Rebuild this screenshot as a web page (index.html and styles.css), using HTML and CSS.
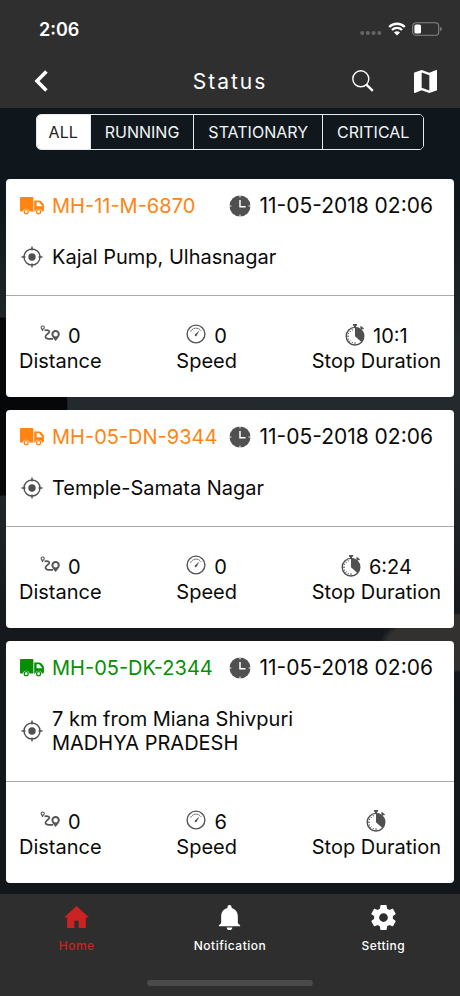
FILE: index.html
```html
<!DOCTYPE html>
<html lang="en">
<head>
    <meta charset="UTF-8">
    <meta name="viewport" content="width=device-width, initial-scale=1.0">
    <title>Status</title>
    <link rel="stylesheet" href="styles.css">
</head>
<body>

    <!-- shared icons -->
    <svg class="sprite" aria-hidden="true">
        <symbol id="truck" viewBox="0 0 24 18">
            <path fill-rule="evenodd" d="M1 0H12.4Q13.4 0 13.4 1V14.4H9.4A3.3 3.3 0 0 0 2.9 14.4H1Q0 14.4 0 13.4V1Q0 0 1 0ZM14.2 3.4H19.2Q20.2 3.4 20.9 4.1L23.2 6.6Q23.9 7.4 23.9 8.4V13.3Q23.9 14.4 22.6 14.4H21.9A3.3 3.3 0 0 0 15.4 14.4H14.2ZM16.6 5.2V9.2H21.9V8.4L19.2 5.2Z"/>
            <path fill-rule="evenodd" d="M6.2 12.1A2.6 2.6 0 1 1 6.2 17.3A2.6 2.6 0 1 1 6.2 12.1ZM6.2 13.3A1.4 1.4 0 1 0 6.2 16.1A1.4 1.4 0 1 0 6.2 13.3ZM18.6 12.1A2.6 2.6 0 1 1 18.6 17.3A2.6 2.6 0 1 1 18.6 12.1ZM18.6 13.3A1.4 1.4 0 1 0 18.6 16.1A1.4 1.4 0 1 0 18.6 13.3Z"/>
        </symbol>
        <symbol id="clock" viewBox="0 0 22 22">
            <circle cx="11" cy="11" r="10.5"/>
            <path d="M11 5V11.7H16.6" fill="none" stroke="#fff" stroke-width="1.5"/>
            <path d="M11 0V2.4M11 19.6V22M0 11H2.4M19.6 11H22" stroke="#fff" stroke-width="1"/>
        </symbol>
        <symbol id="target" viewBox="0 0 22 22">
            <circle cx="11" cy="11" r="8" fill="none" stroke="currentColor" stroke-width="1.4"/>
            <circle cx="11" cy="11" r="3.7"/>
            <path d="M11 .5V4.5M11 17.5V21.5M.5 11H4.5M17.5 11H21.5" stroke="currentColor" stroke-width="1.4"/>
        </symbol>
        <symbol id="route" viewBox="0 0 20 20">
            <circle cx="2.7" cy="3.6" r="1.6" fill="none" stroke="currentColor" stroke-width="1.1"/>
            <path d="M1.3 4.8L2.2 7.4L3.9 5.4Z"/>
            <path d="M4.6 6.4C7 5.8 9.6 6.4 9.4 7.9C9.2 9.4 5.4 10.4 5.4 12.8C5.4 15.1 9 14.8 13 14.8" fill="none" stroke="currentColor" stroke-width="1.7"/>
            <path fill-rule="evenodd" d="M15.6 6A4.2 4.2 0 0 1 19.8 10.2C19.8 12.7 17 15 15.6 17C14.2 15 11.4 12.7 11.4 10.2A4.2 4.2 0 0 1 15.6 6ZM15.6 8A2.2 2.2 0 1 0 15.6 12.4A2.2 2.2 0 1 0 15.6 8Z"/>
        </symbol>
        <symbol id="gauge" viewBox="0 0 20 20">
            <circle cx="10" cy="10" r="8.9" fill="none" stroke="currentColor" stroke-width="1.4"/>
            <path d="M4.6 7.6A6 6 0 0 1 15 6.8" fill="none" stroke="currentColor" stroke-width="1" stroke-dasharray="1.8 .5"/>
            <path d="M13.4 6.4L10.9 11.2A1.1 1.1 0 1 1 9.4 10Z"/>
        </symbol>
        <symbol id="stopwatch" viewBox="0 0 20 22">
            <circle cx="10" cy="12.2" r="8.8" fill="none" stroke="currentColor" stroke-width="1.4"/>
            <path d="M10 12.2V3.6A8.6 8.6 0 0 1 16.4 18Z"/>
            <path d="M7.9 0H12.1V1.7H11V3.4H9V1.7H7.9ZM14.9 3.1L16 1.9L19 4.4L18 5.6L17.2 5L16.5 5.8L15.3 4.8L15.8 4Z"/>
            <path d="M2 12.2H4M10 20V18.2M4.3 6.6L5.6 7.9M4.3 17.8L5.6 16.5M2.8 9L4 9.6M2.8 15.4L4 14.8M7 19.2L7.5 18M7 5.2L7.5 6.4" stroke="currentColor" stroke-width="1"/>
        </symbol>
    </svg>

    <header class="header">
        <div class="status-bar">
            <span class="time">2:06</span>
            <div class="signals">
                <svg class="dots" viewBox="0 0 22 6"><circle cx="2.2" cy="3" r="2"/><circle cx="7.9" cy="3" r="2"/><circle cx="13.6" cy="3" r="2"/><circle cx="19.3" cy="3" r="2"/></svg>
                <svg class="wifi" viewBox="0 0 18 14">
                    <path d="M1.2 5A11 11 0 0 1 16.8 5M4 8A7 7 0 0 1 14 8" fill="none" stroke="#fff" stroke-width="2.3"/>
                    <path d="M9 13.6L6 10.5A4.2 4.2 0 0 1 12 10.5Z" fill="#fff"/>
                </svg>
                <svg class="battery" viewBox="0 0 30 14">
                    <rect x=".7" y=".7" width="26" height="12.6" rx="3.4" fill="none" stroke="#858585" stroke-width="1.1"/>
                    <rect x="2.4" y="2.4" width="6.6" height="9.2" rx="1.6" fill="#fff"/>
                    <path d="M28.2 4.8Q29.8 5.6 29.8 7T28.2 9.2Z" fill="#858585"/>
                </svg>
            </div>
        </div>
        <div class="nav">
            <button type="button" class="icon-button" aria-label="Back">
                <svg class="back" viewBox="0 0 14 22"><path d="M12.4 1.6L3 11L12.4 20.4" fill="none" stroke="#fff" stroke-width="3.6"/></svg>
            </button>
            <h1>Status</h1>
            <div class="nav-actions">
                <button type="button" class="icon-button" aria-label="Search">
                    <svg class="search" viewBox="0 0 22 22"><circle cx="8.8" cy="8.8" r="8" fill="none" stroke="#fff" stroke-width="1.4"/><path d="M14.4 14.6L20.8 20.8" stroke="#fff" stroke-width="2.4"/></svg>
                </button>
                <button type="button" class="icon-button" aria-label="Map">
                    <svg class="map" viewBox="3 3 18 18"><path fill="#fff" d="M20.5 3l-.16.03L15 5.1 9 3 3.36 4.9c-.21.07-.36.25-.36.48V20.5c0 .28.22.5.5.5l.16-.03L9 18.9l6 2.1 5.64-1.9c.21-.07.36-.25.36-.48V3.5c0-.28-.22-.5-.5-.5zM15 19l-6-2.11V5l6 2.11V19z"/></svg>
                </button>
            </div>
        </div>
    </header>

    <main class="content">
        <div class="filters">
            <button type="button" class="filter active">ALL</button>
            <button type="button" class="filter">RUNNING</button>
            <button type="button" class="filter">STATIONARY</button>
            <button type="button" class="filter">CRITICAL</button>
        </div>

        <article class="card">
            <div class="card-info">
                <div class="card-head">
                    <h2 class="vehicle idle"><svg class="truck"><use href="#truck"/></svg>MH-11-M-6870</h2>
                    <div class="date"><svg class="round"><use href="#clock"/></svg>11-05-2018 02:06</div>
                </div>
                <div class="place"><svg class="round"><use href="#target"/></svg><p>Kajal Pump, Ulhasnagar</p></div>
            </div>
            <div class="stats">
                <div class="stat"><div class="value"><svg class="small"><use href="#route"/></svg>0</div>Distance</div>
                <div class="stat"><div class="value"><svg class="small"><use href="#gauge"/></svg>0</div>Speed</div>
                <div class="stat"><div class="value"><svg class="watch"><use href="#stopwatch"/></svg>10:1</div>Stop Duration</div>
            </div>
        </article>

        <article class="card">
            <div class="card-info">
                <div class="card-head">
                    <h2 class="vehicle idle"><svg class="truck"><use href="#truck"/></svg>MH-05-DN-9344</h2>
                    <div class="date"><svg class="round"><use href="#clock"/></svg>11-05-2018 02:06</div>
                </div>
                <div class="place"><svg class="round"><use href="#target"/></svg><p>Temple-Samata Nagar</p></div>
            </div>
            <div class="stats">
                <div class="stat"><div class="value"><svg class="small"><use href="#route"/></svg>0</div>Distance</div>
                <div class="stat"><div class="value"><svg class="small"><use href="#gauge"/></svg>0</div>Speed</div>
                <div class="stat"><div class="value"><svg class="watch"><use href="#stopwatch"/></svg>6:24</div>Stop Duration</div>
            </div>
        </article>

        <article class="card">
            <div class="card-info">
                <div class="card-head">
                    <h2 class="vehicle moving"><svg class="truck"><use href="#truck"/></svg>MH-05-DK-2344</h2>
                    <div class="date"><svg class="round"><use href="#clock"/></svg>11-05-2018 02:06</div>
                </div>
                <div class="place"><svg class="round"><use href="#target"/></svg><p>7 km from Miana Shivpuri<br>MADHYA PRADESH</p></div>
            </div>
            <div class="stats">
                <div class="stat"><div class="value"><svg class="small"><use href="#route"/></svg>0</div>Distance</div>
                <div class="stat"><div class="value"><svg class="small"><use href="#gauge"/></svg>6</div>Speed</div>
                <div class="stat"><div class="value"><svg class="watch"><use href="#stopwatch"/></svg></div>Stop Duration</div>
            </div>
        </article>
    </main>

    <footer class="footer">
        <nav class="tabs">
            <a href="#home" class="tab active">
                <svg viewBox="0 0 24 24"><path d="M12 1L24 12H21V22H14V15H10V22H3V12H0Z"/></svg>
                Home
            </a>
            <a href="#notification" class="tab">
                <svg viewBox="0 0 24 24"><path d="M12 24a2.7 2.7 0 0 0 2.7-2.5H9.3A2.7 2.7 0 0 0 12 24zM20 17.5V11c0-4-2.2-7.2-6-8.2V2a2 2 0 0 0-4 0v.8C6.2 3.8 4 7 4 11v6.5L1.8 19.5V20.5H22.2V19.5z"/></svg>
                Notification
            </a>
            <a href="#setting" class="tab">
                <svg viewBox="2 2 20 20"><path d="M12 15.5A3.5 3.5 0 0 1 8.5 12 3.5 3.5 0 0 1 12 8.5a3.5 3.5 0 0 1 3.5 3.5 3.5 3.5 0 0 1-3.5 3.5m7.43-2.53c.04-.32.07-.64.07-.97s-.03-.66-.07-1l2.11-1.63c.19-.15.24-.42.12-.64l-2-3.46c-.12-.22-.39-.31-.61-.22l-2.49 1c-.52-.39-1.06-.73-1.69-.98l-.37-2.65A.506.506 0 0 0 14 2h-4c-.25 0-.46.18-.5.42l-.37 2.65c-.63.25-1.17.59-1.69.98l-2.49-1c-.22-.09-.49 0-.61.22l-2 3.46c-.13.22-.07.49.12.64L4.57 11c-.04.34-.07.67-.07 1s.03.65.07.97l-2.11 1.66c-.19.15-.25.42-.12.64l2 3.46c.12.22.39.3.61.22l2.49-1.01c.52.4 1.06.74 1.69.99l.37 2.65c.04.24.25.42.5.42h4c.25 0 .46-.18.5-.42l.37-2.65c.63-.26 1.17-.59 1.69-.99l2.49 1.01c.22.08.49 0 .61-.22l2-3.46c.12-.22.07-.49-.12-.64z"/></svg>
                Setting
            </a>
        </nav>
        <div class="home-bar"></div>
    </footer>

</body>
</html>
```
FILE: styles.css
```css
* { box-sizing: border-box; }
body { margin: 0; min-height: 100vh; display: flex; flex-direction: column; font-family: Inter, "Liberation Sans", sans-serif; font-size: 20px; line-height: 25px; color: #0a0a0a; background-color: #11181d; }
h1, h2, p { margin: 0; font-weight: 400; }
button { font-family: inherit; cursor: pointer; }
svg { display: block; flex: none; }
.sprite { display: none; }

.header { height: 108px; background-color: #2f2f2f; color: white; }
.status-bar { display: flex; justify-content: space-between; align-items: center; height: 56px; padding: 2px 18px 0 39px; }
.time { font-size: 18px; font-weight: 600; }
.signals { display: flex; align-items: center; gap: 6px; }
.dots { width: 22px; height: 6px; margin-top: 8px; fill: #666; }
.wifi { width: 18px; height: 14px; }
.battery { width: 30px; height: 14px; }
.nav { display: grid; grid-template-columns: 1fr auto 1fr; align-items: center; height: 50px; padding: 0 23px; }
h1 { font-size: 21px; letter-spacing: 2px; }
.icon-button { padding: 0; border: none; background: none; }
.nav-actions { display: flex; justify-content: flex-end; align-items: center; gap: 40px; }
.back { width: 14px; height: 22px; margin-left: 11px; }
.search { width: 22px; height: 22px; }
.map { width: 23px; height: 23px; }

/* dark backdrop that shows between the cards */
.content {
    flex: 1; display: flex; flex-direction: column; gap: 13px; padding: 6px 6px 11px;
    background:
        radial-gradient(ellipse 68px 90px at 0 38%, #060708 98%, transparent),
        radial-gradient(ellipse 80px 30px at 100% 68%, #33312f 90%, transparent),
        linear-gradient(#10171c, #10171c 12%, #232a2d 30%, #23292c 45%, #15191d 65%, #11171b);
}
.filters { display: flex; align-self: center; height: 36px; margin-bottom: 16px; border: 1px solid #e4eaf0; border-radius: 5px; overflow: hidden; }
.filter { padding: 0 14px; border: none; border-left: 1px solid #e4eaf0; background: #11181d; color: #f2f5f7; font-size: 16px; }
.filter:first-child { padding: 0 12px; border-left: none; }
.filter.active { background: white; color: #222; }

.card { background: white; border-radius: 4px; }
.card-info { padding: 15px 21px 26px 14px; border-bottom: 1px solid #aaa; }
.card-head { display: flex; justify-content: space-between; line-height: 24px; white-space: nowrap; }
.vehicle, .date, .place { display: flex; align-items: center; }
.vehicle { gap: 8px; font-size: 20px; }
.idle { color: #ff8412; }
.moving { color: #058f05; }
.truck { width: 24px; height: 18px; fill: currentColor; }
.date { gap: 8px; font-size: 21px; }
.round { width: 22px; height: 22px; color: #505050; fill: currentColor; }
.place { gap: 9px; margin-top: 27px; padding-left: 1px; line-height: 24px; }
.stats { display: flex; justify-content: space-between; padding: 28px 13px 23px; text-align: center; }
.value { display: flex; justify-content: center; gap: 8px; height: 25px; }
.small { width: 20px; height: 20px; color: #555; fill: currentColor; }
.watch { width: 20px; height: 22px; color: #505050; fill: currentColor; }

.footer { height: 102px; background-color: #2e2e2e; }
.tabs { display: flex; }
.tab { flex: 1; display: flex; flex-direction: column; align-items: center; gap: 8px; padding-top: 11px; color: white; font-size: 12px; font-weight: 500; letter-spacing: 0.5px; line-height: 16px; text-decoration: none; }
.tab svg { width: 25px; height: 25px; fill: currentColor; }
.tab.active { color: #cb2222; }
.home-bar { width: 36%; height: 6px; margin: 26px auto 0; border-radius: 3px; background-color: #4a4a4a; }
```
